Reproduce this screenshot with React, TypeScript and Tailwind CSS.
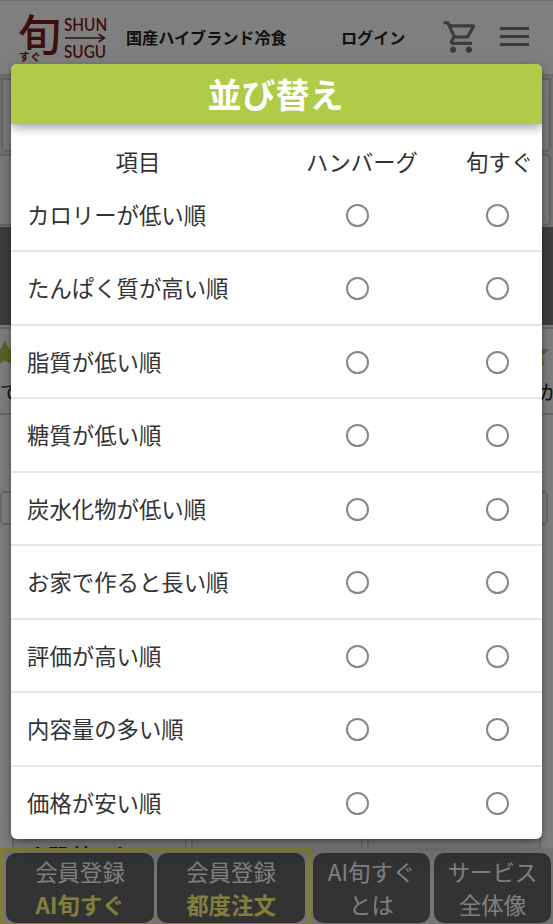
import { useState } from "react";

const SORT_ROWS = [
  "カロリーが低い順",
  "たんぱく質が高い順",
  "脂質が低い順",
  "糖質が低い順",
  "炭水化物が低い順",
  "お家で作ると長い順",
  "評価が高い順",
  "内容量の多い順",
  "価格が安い順",
];

const COLUMNS = ["ハンバーグ", "旬すぐ"];

function Logo() {
  return (
    <div className="relative h-[54px] w-[90px] shrink-0 text-[#7c1c1c]">
      <span className="absolute top-[-3px] left-0 text-[43px] leading-[48px] font-medium">旬</span>
      <span className="absolute top-[39px] left-[1px] bg-white text-[11px] leading-[13px] font-bold">すぐ</span>
      <span className="absolute top-[4px] left-[46px] origin-left scale-x-90 font-[Lato,sans-serif] text-[17px] leading-[20px] font-semibold">
        SHUN
      </span>
      <svg className="absolute top-[22px] left-[46px]" width="42" height="10" viewBox="0 0 42 10" fill="none" stroke="currentColor" strokeWidth="1.6">
        <path d="M1 5h39M34.500 1l6 4-6 4" />
      </svg>
      <span className="absolute top-[31px] left-[46px] origin-left scale-x-90 font-[Lato,sans-serif] text-[17px] leading-[20px] font-semibold">
        SUGU
      </span>
    </div>
  );
}

function Header() {
  return (
    <header className="flex h-[77px] shrink-0 items-start border-t border-b-[3px] border-t-[#dcdcdc] border-b-[#d8d8d8] bg-white pl-[18px]">
      <div className="pt-[10px]">
        <Logo />
      </div>
      <span className="mt-[24px] ml-[18px] w-[215px] text-[16.100px] leading-6 font-bold text-[#222]">
        国産ハイブランド冷食
      </span>
      <span className="mt-[24px] w-[101px] text-[16.100px] leading-6 font-bold text-[#222]">ログイン</span>
      <svg className="mt-[17px]" width="38" height="38" viewBox="0 0 24 24" fill="#777">
        <path d="M15.550 13c.75 0 1.410-.410 1.750-1.030l3.580-6.490A.996.996 0 0 0 20.010 4H5.210l-.940-2H1v2h2l3.600 7.590-1.350 2.440C4.520 15.370 5.480 17 7 17h12v-2H7l1.100-2h7.450zM6.160 6h12.150l-2.760 5H8.530L6.160 6zM7 18c-1.100 0-1.990.9-1.990 2S5.900 22 7 22s2-.9 2-2-.9-2-2-2zm10 0c-1.100 0-1.990.9-1.990 2s.89 2 1.990 2 2-.9 2-2-.9-2-2-2z" />
      </svg>
      <svg className="mt-[25px] ml-[20px]" width="30" height="21" viewBox="0 0 30 21" fill="#777">
        <path d="M0 1h29v3H0zM0 9h29v3H0zM0 17h29v3H0z" />
      </svg>
    </header>
  );
}

function Star() {
  return (
    <svg width="28" height="27" viewBox="0 0 24 24" fill="#b0cb48">
      <path d="m12 .8 3.400 7.800 8.400.8-6.400 5.600 1.900 8.300L12 19l-7.300 4.300L6.600 15 .2 9.400l8.400-.8z" />
    </svg>
  );
}

function PageBehind() {
  return (
    <div className="flex h-full flex-col">
      <Header />
      <div className="flex h-[150px] shrink-0 flex-col gap-[2px] bg-[#eaeaea] pt-px pr-[2px]">
        <div className="ml-px h-[74px] rounded-b-[6px] border-2 border-[#ccc] bg-[#f8f8f8]" />
        <div className="h-[72px] rounded-r-[6px] border-2 border-l-0 border-[#ccc] bg-[#f8f8f8]" />
      </div>
      <div className="h-[98px] shrink-0 bg-[#7c7c7c]" />
      <div className="mt-[2px] h-[88px] shrink-0 border-y-2 border-[#d0d0d0]">
        <div className="flex h-[36px] justify-between pt-[10px]">
          <div className="-ml-[9px]">
            <Star />
          </div>
          <div className="mr-[3px]">
            <Star />
          </div>
        </div>
        <div className="mt-[13px] flex justify-between text-[20px] leading-7 text-[#222]">
          <span>て</span>
          <span className="-mr-[6px]">が</span>
        </div>
      </div>
      <div className="mt-[76px] mr-[5px] h-[34px] rounded-[5px] border-2 border-[#d4d4d4]" />
      <div className="mt-auto flex h-[86px] shrink-0 gap-[4px] px-[12px]">
        <div className="w-[175px] overflow-hidden border-x-2 border-[#d4d4dc] bg-[#f4f4ec] px-[14px] pt-[80px] text-[20px] leading-7 font-bold whitespace-nowrap text-[#222]">
          人間 焼ほか
        </div>
        <div className="w-[173px] border-x-2 border-[#d4d4dc] bg-[#f4f4ec]" />
        <div className="w-[174px] border-x-2 border-[#d4d4dc] bg-[#f4f4ec]" />
      </div>
      <nav className="flex h-[76px] shrink-0 bg-[#e9e9e6] text-center text-[22.4px] leading-[33px] text-white">
        <div className="flex w-[311px] gap-[3px] border-4 border-b-[1px] border-[#ffff70] px-[2px] pt-px">
          <NavButton top="会員登録" bottom="AI旬すぐ" strong />
          <NavButton top="会員登録" bottom="都度注文" strong />
        </div>
        <div className="flex flex-1 gap-[4px] pt-[5px] pr-[2px] pb-px pl-[2px]">
          <NavButton top="AI旬すぐ" bottom="とは" />
          <NavButton top="サービス" bottom="全体像" />
        </div>
      </nav>
    </div>
  );
}

function NavButton({ top, bottom, strong }: { top: string; bottom: string; strong?: boolean }) {
  return (
    <div className="flex flex-1 flex-col rounded-[10px] bg-[#666] pt-[2px]">
      <span>{top}</span>
      <span className={strong ? "font-bold text-[#ffff7c]" : ""}>{bottom}</span>
    </div>
  );
}

function SortDialog() {
  const [selected, setSelected] = useState<string | null>(null);

  return (
    <section className="flex h-[775px] w-[531px] flex-col overflow-hidden rounded-[6px] bg-white text-[22.4px] text-[#333] shadow-[0_2px_5px_rgba(0,0,0,0.35),0_10px_24px_rgba(0,0,0,0.18)]">
      <h2 className="z-10 h-[60px] shrink-0 bg-[#b0cb48] pr-[2px] text-center text-[34px] leading-[60px] font-bold text-white shadow-[0_3px_10px_rgba(0,0,0,0.4)]">
        並び替え
      </h2>
      <div className="grid h-[56px] shrink-0 grid-cols-[254px_194px_82px] pt-[20px] text-center leading-[34px]">
        <span>項目</span>
        <span>{COLUMNS[0]}</span>
        <span className="-ml-[1px] whitespace-nowrap">{COLUMNS[1]}</span>
      </div>
      {SORT_ROWS.map((row, i) => (
        <div
          key={row}
          className={`grid shrink-0 grid-cols-[254px_185px_95px] items-center ${
            i === 0 ? "h-[70px] pt-px" : "h-[73.500px] border-t-2 border-[#e6e6e6] pt-[2px]"
          }`}
        >
          <span className="-mt-px pl-[16px]">{row}</span>
          {COLUMNS.map((column) => (
            <button
              key={column}
              aria-label={`${row} ${column}`}
              onClick={() => setSelected(`${row}-${column}`)}
              className="mx-auto flex h-[23px] w-[23px] items-center justify-center rounded-full border-2 border-[#87878a]"
            >
              {selected === `${row}-${column}` && <span className="h-3 w-3 rounded-full bg-[#b0cb48]" />}
            </button>
          ))}
        </div>
      ))}
    </section>
  );
}

export default function App() {
  return (
    <div className="relative h-[924px] w-[553px] overflow-hidden bg-white font-['Noto_Sans_CJK_JP',sans-serif]">
      <PageBehind />
      <div className="absolute inset-0 flex items-start justify-center bg-black/50 pt-[64px]">
        <SortDialog />
      </div>
    </div>
  );
}
